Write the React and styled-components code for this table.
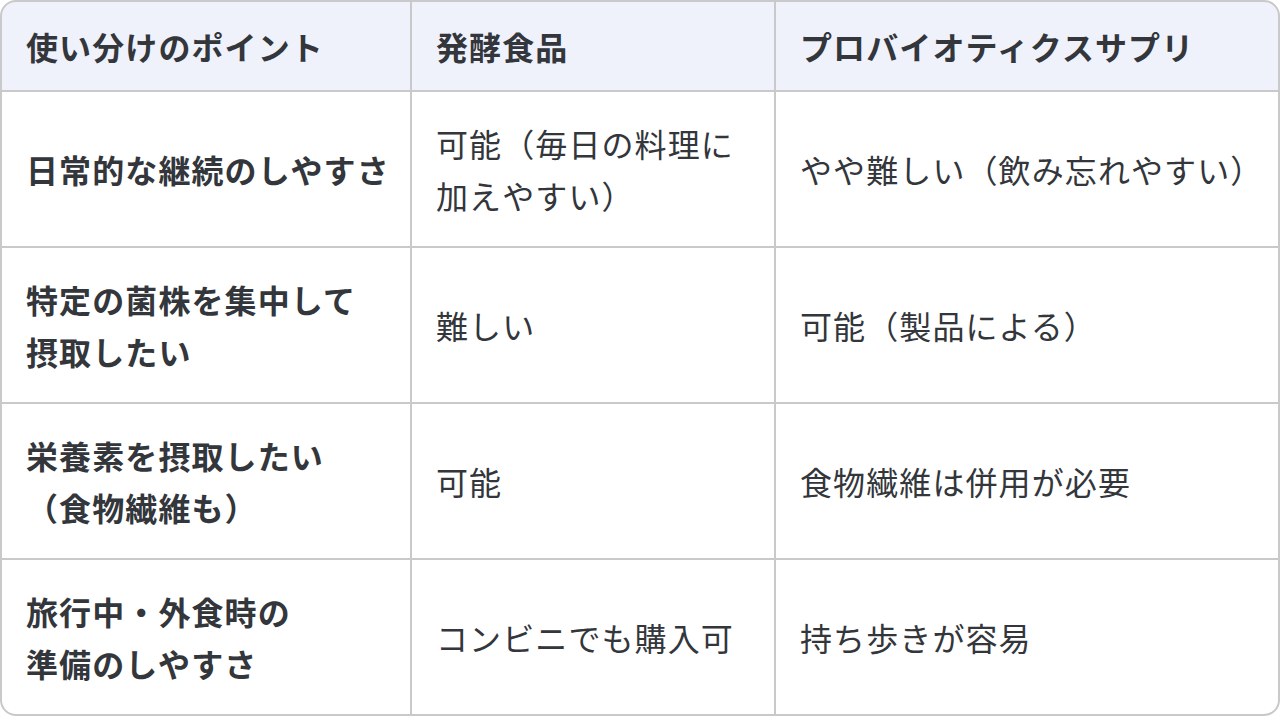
import React from "react";
import styled, { createGlobalStyle } from "styled-components";

const GlobalStyle = createGlobalStyle`
  html, body {
    margin: 0;
    padding: 0;
    background: #fff;
  }
  body {
    font-family: "Noto Sans CJK JP", "Noto Sans", sans-serif;
    color: #33363b;
  }
`;

const Table = styled.div`
  width: 1280px;
  height: 716px;
  box-sizing: border-box;
  border: 2px solid #c9c9cb;
  border-radius: 16px;
  overflow: hidden;
  display: grid;
  grid-template-columns: 408px 362px 502px;
  grid-template-rows: 88px repeat(4, 154px);
  gap: 2px;
  background: #c9c9cb;
`;

const Cell = styled.div`
  display: flex;
  align-items: center;
  box-sizing: border-box;
  padding: 0 24px;
  font-size: 32px;
  line-height: 52px;
  letter-spacing: 1.1px;
  white-space: nowrap;
  font-weight: ${(p) => (p.$bold ? 700 : 400)};
  background: ${(p) => (p.$head ? "#eff2fb" : "#fff")};
  color: #33363b;
`;

const head = ["使い分けのポイント", "発酵食品", "プロバイオティクスサプリ"];

const rows = [
  [["日常的な継続のしやすさ"], ["可能（毎日の料理に", "加えやすい）"], ["やや難しい（飲み忘れやすい）"]],
  [["特定の菌株を集中して", "摂取したい"], ["難しい"], ["可能（製品による）"]],
  [["栄養素を摂取したい", "（食物繊維も）"], ["可能"], ["食物繊維は併用が必要"]],
  [["旅行中・外食時の", "準備のしやすさ"], ["コンビニでも購入可"], ["持ち歩きが容易"]],
];

const Lines = ({ lines }) =>
  lines.map((l, i) => (
    <React.Fragment key={i}>
      {i > 0 && <br />}
      {l}
    </React.Fragment>
  ));

export default function App() {
  return (
    <>
      <GlobalStyle />
      <Table>
        {head.map((h) => (
          <Cell key={h} $head $bold>
            {h}
          </Cell>
        ))}
        {rows.map((row, r) =>
          row.map((lines, c) => (
            <Cell key={`${r}-${c}`} $bold={c === 0}>
              <div>
                <Lines lines={lines} />
              </div>
            </Cell>
          ))
        )}
      </Table>
    </>
  );
}
